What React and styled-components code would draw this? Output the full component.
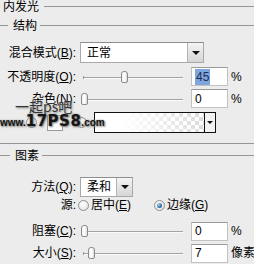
import React from "react";
import styled, { createGlobalStyle } from "styled-components";

const GlobalStyle = createGlobalStyle`
  html, body {
    margin: 0;
    padding: 0;
    background: #ececec;
  }
  body {
    font-family: "Liberation Sans", "Noto Sans CJK SC", sans-serif;
    color: #000;
  }
`;

function Slider({ pos }) {
  return (
    <SliderBox>
      <Track>
        <TrackTick />
      </Track>
      <Thumb style={{ left: pos }} />
    </SliderBox>
  );
}

function NumberField({ value, selected, unit }) {
  return (
    <>
      <Field>{selected ? <Selected>{value}</Selected> : value}</Field>
      <Unit>{unit}</Unit>
    </>
  );
}

function Dropdown({ width, value }) {
  return (
    <Select $w={width}>
      <SelectValue>{value}</SelectValue>
      <SelectButton>
        <Arrow />
      </SelectButton>
    </Select>
  );
}

export default function App() {
  return (
    <Panel>
      <GlobalStyle />
      <HeaderRow>
        <TitleText>内发光</TitleText>
        <Rule />
      </HeaderRow>

      <HeaderRow $mt={6}>
        <LeadRule $w={8} />
        <GroupText>结构</GroupText>
        <Rule />
      </HeaderRow>

      <Row $mt={10} $h={21}>
        <Label>混合模式(<u>B</u>):</Label>
        <Dropdown width={124} value="正常" />
      </Row>

      <Row $mt={3} $h={21}>
        <Label>不透明度(<u>O</u>):</Label>
        <Slider pos={41} />
        <NumberField value="45" selected unit="%" />
      </Row>

      <Row $mt={1} $h={21}>
        <Label>杂色(<u>N</u>):</Label>
        <Slider pos={1} />
        <NumberField value="0" unit="%" />
      </Row>

      <Row $mt={3} $h={21}>
        <Radio $ml={26} />
        <Swatch />
        <Radio $ml={13} />
        <Gradient>
          <GradientFill />
          <GradientButton>
            <Arrow $small />
          </GradientButton>
        </Gradient>
      </Row>

      <Separator />

      <HeaderRow $mt={5}>
        <LeadRule $w={10} />
        <GroupText>图素</GroupText>
        <Rule />
      </HeaderRow>

      <Row $mt={15} $h={20}>
        <Label>方法(<u>Q</u>):</Label>
        <Dropdown width={53} value="柔和" />
      </Row>

      <Row $mt={1} $h={14}>
        <Label $mr={2}>源:</Label>
        <Option>
          <Radio />
          <span>居中(<u>E</u>)</span>
        </Option>
        <Option $ml={23}>
          <Radio $checked />
          <span>边缘(<u>G</u>)</span>
        </Option>
      </Row>

      <Row $mt={9} $h={20}>
        <Label>阻塞(<u>C</u>):</Label>
        <Slider pos={1} />
        <NumberField value="0" unit="%" />
      </Row>

      <Row $mt={2} $h={20}>
        <Label>大小(<u>S</u>):</Label>
        <Slider pos={8} />
        <NumberField value="7" unit="像素" />
      </Row>

      <Watermark>
        <WatermarkTitle>一起ps吧</WatermarkTitle>
        <WatermarkUrl>
          <small>www.</small>17PS8<small>.com</small>
        </WatermarkUrl>
      </Watermark>
    </Panel>
  );
}

const Panel = styled.div`
  position: relative;
  width: 254px;
  height: 264px;
  overflow: hidden;
  background: #ececec;
  display: flex;
  flex-direction: column;
  font-size: 12px;
  line-height: 1;
`;

const HeaderRow = styled.div`
  display: flex;
  align-items: center;
  height: 13px;
  margin-top: ${(p) => p.$mt || 0}px;
  font-size: 12px;
`;

const TitleText = styled.span`
  padding-left: 3px;
  margin-right: 5px;
  white-space: nowrap;
`;

const Rule = styled.div`
  flex: 1;
  height: 0;
  border-top: 1px solid #969696;
`;

const LeadRule = styled.div`
  width: ${(p) => p.$w}px;
  height: 0;
  border-top: 1px solid #969696;
`;

const GroupText = styled.span`
  margin: 0 3px 0 ${(p) => p.$ml || 5}px;
  white-space: nowrap;
`;

const Separator = styled.div`
  margin-top: 10px;
  height: 0;
  border-top: 1px solid #969696;
`;

const Row = styled.div`
  display: flex;
  align-items: center;
  height: ${(p) => p.$h}px;
  margin-top: ${(p) => p.$mt || 0}px;
`;

const Label = styled.span`
  width: 76px;
  margin-right: ${(p) => (p.$mr === undefined ? 4 : p.$mr)}px;
  text-align: right;
  white-space: nowrap;
  flex-shrink: 0;
`;

const Select = styled.div`
  display: flex;
  width: ${(p) => p.$w}px;
  height: 100%;
  box-sizing: border-box;
  background: #fff;
  border: 1px solid #a9a9a9;
  border-top-color: #8e8e8e;
`;

const SelectValue = styled.span`
  flex: 1;
  display: flex;
  align-items: center;
  padding-left: 6px;
  white-space: nowrap;
`;

const SelectButton = styled.div`
  width: 15px;
  display: flex;
  align-items: center;
  justify-content: center;
  border-left: 1px solid #b4b4b4;
  background: linear-gradient(#f4f4f4, #d6d6d6);
`;

const Arrow = styled.div`
  width: 0;
  height: 0;
  border-left: ${(p) => (p.$small ? 3 : 4)}px solid transparent;
  border-right: ${(p) => (p.$small ? 3 : 4)}px solid transparent;
  border-top: ${(p) => (p.$small ? 3 : 4)}px solid #111;
`;

const SliderBox = styled.div`
  position: relative;
  width: 106px;
  height: 100%;
  flex-shrink: 0;
`;

const Track = styled.div`
  position: absolute;
  left: 3px;
  right: 3px;
  top: 50%;
  height: 1px;
  background: #a3a3a3;
  box-shadow: 0 1px 0 #fbfbfb;
`;

const TrackTick = styled.div`
  position: absolute;
  left: 0;
  top: -1px;
  width: 1px;
  height: 3px;
  background: #9a9a9a;
`;

const Thumb = styled.div`
  position: absolute;
  top: 50%;
  width: 7px;
  height: 12px;
  margin-top: -6px;
  box-sizing: border-box;
  border: 1px solid #8a8a8a;
  border-radius: 3px 3px 2px 2px;
  background: linear-gradient(to right, #f2f2f2, #ffffff 50%, #dcdcdc);
`;

const Field = styled.div`
  width: 37px;
  height: 19px;
  margin-left: 5px;
  box-sizing: border-box;
  padding-left: 3px;
  display: flex;
  align-items: center;
  background: #fff;
  border: 1px solid #c2c2c2;
  border-top-color: #9a9a9a;
  font-size: 12px;
  flex-shrink: 0;
`;

const Selected = styled.span`
  background: #7ea6dc;
  color: #1c2d57;
  padding: 2px 1px;
`;

const Unit = styled.span`
  margin-left: 3px;
  white-space: nowrap;
`;

const Radio = styled.div`
  position: relative;
  width: 11px;
  height: 11px;
  margin-left: ${(p) => p.$ml || 0}px;
  box-sizing: border-box;
  border-radius: 50%;
  border: 1px solid #8f8f8f;
  background: radial-gradient(circle at 40% 35%, #ffffff, #dcdcdc);
  flex-shrink: 0;

  &::after {
    content: "";
    display: ${(p) => (p.$checked ? "block" : "none")};
    position: absolute;
    left: 2px;
    top: 2px;
    width: 5px;
    height: 5px;
    border-radius: 50%;
    background: radial-gradient(circle at 35% 35%, #a9d6f0, #1b5f92 70%);
  }
`;

const Option = styled.label`
  display: flex;
  align-items: center;
  gap: 2px;
  margin-left: ${(p) => p.$ml || 0}px;
  white-space: nowrap;
`;

const Swatch = styled.div`
  width: 16px;
  height: 16px;
  margin-left: 10px;
  box-sizing: border-box;
  background: #fff;
  border: 1px solid #9a9a9a;
  flex-shrink: 0;
`;

const Gradient = styled.div`
  display: flex;
  width: 122px;
  height: 21px;
  margin-left: 7px;
  box-sizing: border-box;
  border: 1px solid #111;
  flex-shrink: 0;
`;

const GradientFill = styled.div`
  flex: 1;
  background:
    linear-gradient(to right, #fff 25%, rgba(255, 255, 255, 0.2) 100%),
    repeating-conic-gradient(#d2d2d2 0 25%, #ffffff 0 50%) 0 0 / 8px 8px;
`;

const GradientButton = styled.div`
  width: 10px;
  display: flex;
  align-items: center;
  justify-content: center;
  border-left: 1px solid #111;
  background: #f2f2f2;
`;

const Watermark = styled.div`
  position: absolute;
  left: 0;
  top: 98px;
  pointer-events: none;
`;

const WatermarkTitle = styled.div`
  margin-left: 15px;
  font-family: "Noto Sans CJK SC", sans-serif;
  font-size: 14px;
  line-height: 16px;
  color: #353535;
  text-shadow: 1px 1px 2px #8a8a8a, 0 0 1px #fff;
`;

const WatermarkUrl = styled.div`
  font-family: "DejaVu Sans", sans-serif;
  font-weight: bold;
  font-size: 15px;
  line-height: 14px;
  color: #151515;
  letter-spacing: 0.5px;
  text-shadow: 1px 1px 2px #7a7a7a, 0 0 2px #9a9a9a;

  small {
    font-family: "Liberation Sans", sans-serif;
    font-size: 10px;
    letter-spacing: 0;
  }
`;
